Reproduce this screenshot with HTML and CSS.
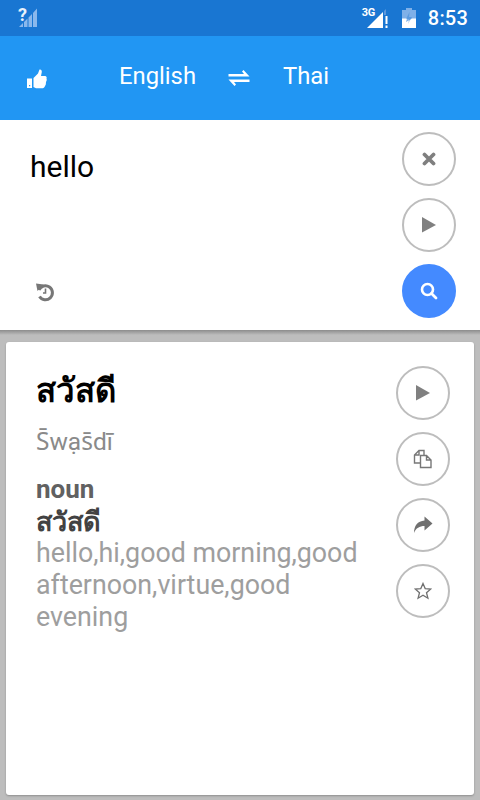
FILE: index.html
```html
<!DOCTYPE html>
<html lang="en">
<head>
<meta charset="utf-8">
<title>Translate</title>
<link rel="stylesheet" href="styles.css">
</head>
<body>
<div class="status">
  <div class="signal-left">
    <span class="q">?</span>
    <svg class="bars" width="20" height="22" viewBox="0 0 20 22"><path d="M1 21 L5 17 V21Z M6 21 V16 L9.500 12.500 V21Z M10.500 21 V11.500 L14 8 V21Z M15 21 V7 L19 2.500 V21Z" fill="#8ab8ec"/></svg>
  </div>
  <div class="status-right">
    <span class="net">3G</span>
    <svg class="sig" width="22" height="22" viewBox="0 0 22 22"><path d="M0 20 L16 4 V20Z" fill="#fff"/><path d="M17 3 L19 1 V7 H17Z" fill="#5b97dc"/><path d="M18.500 8 h2 v8 h-2z M18.500 17.500 h2 v2.500 h-2z" fill="#fff"/></svg>
    <svg class="batt" width="14" height="22" viewBox="0 0 14 22"><path d="M4 0 H10 V2 H14 V20 H0 V2 H4Z" fill="#7fb0e8"/><path d="M0 20 V10.500 H5 L4 14 L10 10.500 H14 V20Z" fill="#fff"/><path d="M7.500 4 L4 11 H7 L6 16 L10 9 H7Z" fill="#1976d2" opacity=".35"/></svg>
    <span class="time">8:53</span>
  </div>
</div>
<header class="bar">
  <svg class="thumb" width="20" height="20" viewBox="0 0 20 20"><path d="M0 9.500 H5 V19 H0Z M2 16 h1.200 v1.200 h-1.200Z" fill="#fff" fill-rule="evenodd"/><path d="M6.500 9 L11 4.500 L12.500 0.500 C14 0 15 1.500 14.800 3 L14 7 H18 C19.500 7 20 8.500 19.500 9.500 L19.800 11 L19 13 L18.800 15.500 L17.500 18 C17 19 16 19.200 15 19.200 H9 L6.500 18Z" fill="#fff"/></svg>
  <div class="langs">
    <span class="lang lang-en">English</span>
    <svg class="swap" width="22" height="16" viewBox="0 0 22 16"><path d="M0.500 4 H16 L14 1.500 L15.500 0 L21.500 6.500 H0.500Z M21.500 9.500 H0.500 L6.500 16 L8 14.500 L6 12 H21.500Z" fill="#fff"/></svg>
    <span class="lang">Thai</span>
  </div>
</header>
<section class="input">
  <div class="input-main">
    <div class="word">hello</div>
    <svg class="history" width="20" height="20" viewBox="0 0 20 20"><path d="M4 8 A7 7 0 1 1 4.500 14.500" fill="none" stroke="#777" stroke-width="3"/><path d="M1 1.500 L8.500 2.500 L2.500 9Z" fill="#777"/><path d="M10.500 6.500 V11 H8" fill="none" stroke="#777" stroke-width="1.600"/></svg>
  </div>
  <div class="actions">
    <button class="round"><svg width="14" height="14" viewBox="0 0 14 14"><path d="M2.500 2.500 L11.500 11.500 M11.500 2.500 L2.500 11.500" stroke="#7f7f7f" stroke-width="3.800" stroke-linecap="round"/></svg></button>
    <button class="round"><svg width="16" height="18" viewBox="0 0 16 18"><path d="M1 1 L15 9 L1 16.500Z" fill="#808080"/></svg></button>
    <button class="round round-blue"><svg width="18" height="18" viewBox="0 0 18 18"><circle cx="7.500" cy="7.500" r="5.500" fill="none" stroke="#fff" stroke-width="2.600"/><path d="M11.500 11.500 L16 16" stroke="#fff" stroke-width="2.800" stroke-linecap="round"/></svg></button>
  </div>
</section>
<main class="stage">
  <article class="card">
    <div class="result">
      <h1 class="thai-big">สวัสดี</h1>
      <p class="translit">S̄wạs̄dī</p>
      <p class="pos">noun</p>
      <p class="thai-small">สวัสดี</p>
      <p class="meanings">hello,hi,good morning,good afternoon,virtue,good evening</p>
    </div>
    <div class="actions">
      <button class="round"><svg width="16" height="18" viewBox="0 0 16 18"><path d="M1 1 L15 9 L1 16.500Z" fill="#808080"/></svg></button>
      <button class="round"><svg width="20" height="20" viewBox="0 0 20 20"><path d="M7 14 H1.500 V6 L6 1.500 H11 V6 M1.500 6 H6 V1.500" fill="none" stroke="#777" stroke-width="1.400"/><path d="M7.500 6.500 H13.500 L18 11 V18.500 H7.500Z M13.500 6.500 V11 H18" fill="#fff" stroke="#777" stroke-width="1.400"/></svg></button>
      <button class="round"><svg width="20" height="18" viewBox="0 0 20 18"><path d="M11.500 0.500 L19.500 7.500 L11.500 14.500 V10 C6.500 10 3 12 1 17 C1 10 4.500 5 11.500 4.500Z" fill="#707070"/></svg></button>
      <button class="round"><svg width="18" height="18" viewBox="0 0 18 18"><path d="M9 1.500 L11.200 6.600 L16.800 7 L12.500 10.700 L13.900 16.200 L9 13.300 L4.100 16.200 L5.500 10.700 L1.200 7 L6.800 6.600Z" fill="none" stroke="#707070" stroke-width="1.300"/></svg></button>
    </div>
  </article>
</main>
</body>
</html>
```
FILE: styles.css
```css
* { box-sizing: border-box; }
html, body { margin: 0; padding: 0; }
body {
  width: 480px;
  height: 800px;
  overflow: hidden;
  display: flex;
  flex-direction: column;
  font-family: Roboto, "Noto Sans", sans-serif;
  background: #bdbdbd;
}
.status {
  height: 36px;
  background: #1976d2;
  display: flex;
  justify-content: space-between;
  align-items: center;
  color: #fff;
  padding: 0 12px 0 18px;
}
.signal-left { display: flex; align-items: flex-start; height: 36px; padding-top: 6px; }
.q { font-size: 18px; font-weight: 700; line-height: 18px; width: 9px; color: #e8f1fb; }
.bars { margin-left: -9px; }
.status-right { display: flex; align-items: center; height: 36px; }
.net { font-size: 11px; font-weight: 700; line-height: 11px; width: 13px; align-self: flex-start; margin-top: 7px; letter-spacing: -.3px; }
.sig { margin: 2px 0 0 -8px; }
.batt { margin: 2px 0 0 13px; }
.time { font-size: 20px; font-weight: 500; margin-left: 12px; letter-spacing: .2px; }
.bar {
  height: 84px;
  background: #2196f3;
  display: flex;
  align-items: flex-start;
  padding: 33px 0 0 27px;
  color: #fff;
}
.thumb { margin-top: 0; }
.langs { display: flex; align-items: center; margin-left: 72px; margin-top: -7px; }
.lang { font-size: 23.8px; line-height: 28px; }
.lang-en { width: 77px; }
.swap { margin: 3px 33px 0 32px; }
.input {
  height: 210px;
  background: #fff;
  display: flex;
  justify-content: space-between;
  padding: 12px 24px 0 30px;
}
.input-main {
  display: flex;
  flex-direction: column;
  justify-content: space-between;
  padding: 17px 0 28px;
  flex: 1;
}
.word { font-size: 30px; line-height: 36px; color: #000; }
.history { margin-left: 5px; }
.actions { display: flex; flex-direction: column; gap: 12px; }
.round {
  width: 54px;
  height: 54px;
  border-radius: 50%;
  border: 2px solid #bdbdbd;
  background: #fff;
  padding: 0;
  display: flex;
  align-items: center;
  justify-content: center;
}
.round-blue { background: #448aff; border-color: #448aff; }
.stage {
  flex: 1;
  padding: 12px 6px 5px;
  background: linear-gradient(#8c8c8c, #bdbdbd 5px);
}
.card {
  height: 100%;
  background: #fff;
  border-radius: 3px;
  box-shadow: 0 1px 2px #8f8f8f;
  display: flex;
  justify-content: space-between;
  padding: 24px 24px 0 30px;
}
.result { width: 330px; }
.thai-big { margin: 0; font-size: 33px; line-height: 48px; font-weight: 700; color: #000; font-family: "Noto Sans", "DejaVu Sans", sans-serif; }
.translit { margin: 12px 0 0; font-size: 24.5px; line-height: 32px; color: #8a8a8a; }
.pos { margin: 15px 0 0; font-size: 26px; line-height: 32px; font-weight: 700; color: #616161; }
.thai-small { margin: 0; font-size: 27px; line-height: 32px; font-weight: 700; color: #424242; font-family: "Noto Sans", "DejaVu Sans", sans-serif; }
.meanings { margin: 0; font-size: 26.8px; line-height: 32px; color: #9e9e9e; }
```
